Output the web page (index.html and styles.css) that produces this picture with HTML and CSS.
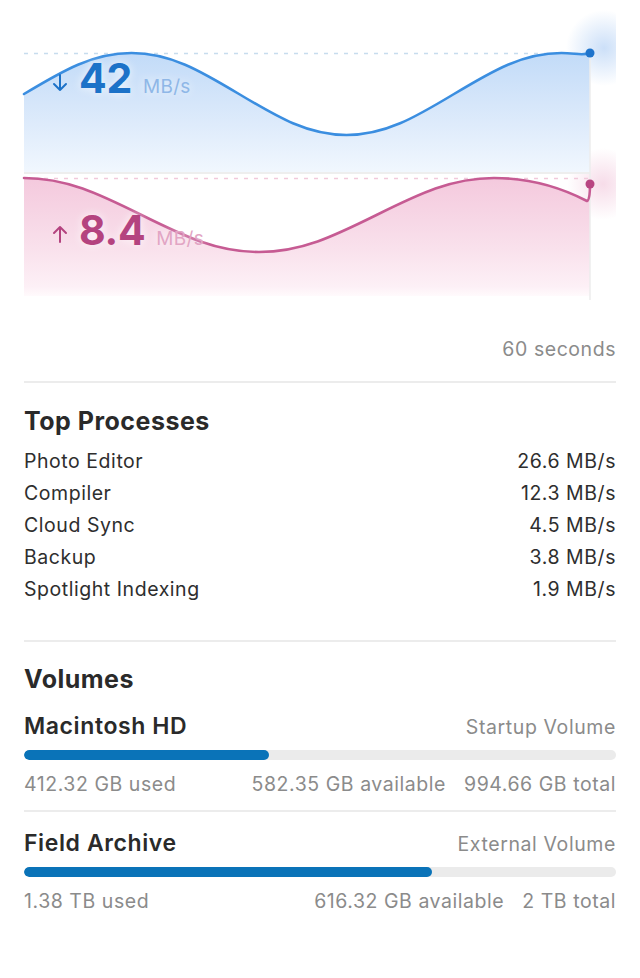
FILE: index.html
```html
<!DOCTYPE html>
<html lang="en">
<head>
<meta charset="utf-8">
<title>Network &amp; Disk</title>
<link rel="stylesheet" href="styles.css">
</head>
<body>
<main class="panel">
  <section class="chart">
    <svg class="chart-svg" width="616" height="300" viewBox="0 0 616 300" xmlns="http://www.w3.org/2000/svg">
      <defs>
        <linearGradient id="blueFill" x1="0" y1="53" x2="0" y2="172" gradientUnits="userSpaceOnUse">
          <stop offset="0" stop-color="#c2dbf8"/>
          <stop offset="0.6" stop-color="#deebfb"/>
          <stop offset="1" stop-color="#f1f7fe"/>
        </linearGradient>
        <linearGradient id="pinkFill" x1="0" y1="178" x2="0" y2="296" gradientUnits="userSpaceOnUse">
          <stop offset="0" stop-color="#f4c9dd"/>
          <stop offset="0.6" stop-color="#f9e1ec"/>
          <stop offset="0.92" stop-color="#fdf0f6"/>
          <stop offset="1" stop-color="#fffafc"/>
        </linearGradient>
        <radialGradient id="blueGlow">
          <stop offset="0" stop-color="#7fb0ee" stop-opacity="0.4"/>
          <stop offset="1" stop-color="#7fb0ee" stop-opacity="0"/>
        </radialGradient>
        <radialGradient id="pinkGlow">
          <stop offset="0" stop-color="#e79bc0" stop-opacity="0.35"/>
          <stop offset="1" stop-color="#e79bc0" stop-opacity="0"/>
        </radialGradient>
      </defs>
      <circle cx="604" cy="48" r="38" fill="url(#blueGlow)"/>
      <circle cx="603" cy="184" r="36" fill="url(#pinkGlow)"/>
      <path d="M24,94 C63.1,70.5 92.8,53 131.5,53 C170.2,53 199.9,70.5 239,94 C278.1,117.5 307.8,135 346.5,135 C385.2,135 414.9,117.5 454,94 C493.1,70.5 522.8,53 561.5,53 C575,53 583,56 590,53 L590,172 L24,172 Z" fill="url(#blueFill)"/>
      <path d="M24,178 C66.3,178 98.7,193.8 141.5,215 C184.3,236.2 216.7,252 259,252 C301.3,252 333.7,236.2 376.5,215 C419.3,193.8 451.7,178 494,178 C530,178 562,188 587,201 Q590,200 590,184 L590,296 L24,296 Z" fill="url(#pinkFill)"/>
      <line x1="24" y1="173" x2="590" y2="173" stroke="#eeeeee" stroke-width="2"/>
      <line x1="590" y1="53" x2="590" y2="300" stroke="#ececec" stroke-width="1.5"/>
      <line x1="24" y1="53.5" x2="590" y2="53.5" stroke="#c7dced" stroke-width="1.5" stroke-dasharray="4 6"/>
      <line x1="24" y1="178.5" x2="590" y2="178.5" stroke="#f1c9db" stroke-width="1.5" stroke-dasharray="4 6"/>
      <path d="M24,94 C63.1,70.5 92.8,53 131.5,53 C170.2,53 199.9,70.5 239,94 C278.1,117.5 307.8,135 346.5,135 C385.2,135 414.9,117.5 454,94 C493.1,70.5 522.8,53 561.5,53 C575,53 583,56 590,53" fill="none" stroke="#3b8ee0" stroke-width="2.6" stroke-linecap="round"/>
      <path d="M24,178 C66.3,178 98.7,193.8 141.5,215 C184.3,236.2 216.7,252 259,252 C301.3,252 333.7,236.2 376.5,215 C419.3,193.8 451.7,178 494,178 C530,178 562,188 587,201 Q590,200 590,184" fill="none" stroke="#c65b93" stroke-width="2.6" stroke-linecap="round" stroke-linejoin="round"/>
      <circle cx="590" cy="53" r="4.5" fill="#1f74cc"/>
      <circle cx="590" cy="184" r="4.5" fill="#b84582"/>
    </svg>
    <div class="readout readout-down">
      <svg class="arrow" width="16" height="18" viewBox="0 0 16 18"><path d="M8 1 V16 M2 10 L8 16 L14 10" fill="none" stroke="currentColor" stroke-width="2" stroke-linecap="round" stroke-linejoin="round"/></svg>
      <span class="value">42</span>
      <span class="unit">MB/s</span>
    </div>
    <div class="readout readout-up">
      <svg class="arrow" width="16" height="18" viewBox="0 0 16 18"><path d="M8 17 V2 M2 8 L8 2 L14 8" fill="none" stroke="currentColor" stroke-width="2" stroke-linecap="round" stroke-linejoin="round"/></svg>
      <span class="value">8.4</span>
      <span class="unit">MB/s</span>
    </div>
  </section>

  <div class="content">
    <p class="timeframe">60 seconds</p>
    <hr class="divider divider-first">

    <h2 class="section-title">Top Processes</h2>
    <ul class="process-list">
      <li class="process"><span>Photo Editor</span><span>26.6 MB/s</span></li>
      <li class="process"><span>Compiler</span><span>12.3 MB/s</span></li>
      <li class="process"><span>Cloud Sync</span><span>4.5 MB/s</span></li>
      <li class="process"><span>Backup</span><span>3.8 MB/s</span></li>
      <li class="process"><span>Spotlight Indexing</span><span>1.9 MB/s</span></li>
    </ul>
    <hr class="divider divider-second">

    <h2 class="section-title volumes-title">Volumes</h2>
    <div class="volume volume-first">
      <div class="volume-head"><span class="volume-name">Macintosh HD</span><span class="volume-kind">Startup Volume</span></div>
      <div class="bar"><div class="bar-fill" style="width: 41.45%"></div></div>
      <div class="volume-stats"><span class="used">412.32 GB used</span><span>582.35 GB available</span><span>994.66 GB total</span></div>
    </div>
    <hr class="divider divider-volume">
    <div class="volume">
      <div class="volume-head"><span class="volume-name">Field Archive</span><span class="volume-kind">External Volume</span></div>
      <div class="bar"><div class="bar-fill" style="width: 69%"></div></div>
      <div class="volume-stats"><span class="used">1.38 TB used</span><span>616.32 GB available</span><span>2 TB total</span></div>
    </div>
  </div>
</main>
</body>
</html>
```

FILE: styles.css
```css
* { box-sizing: border-box; }

html, body {
  margin: 0;
  padding: 0;
  background: #ffffff;
}

body {
  font-family: Inter, "Noto Sans", "Liberation Sans", sans-serif;
  color: #2c2c2c;
  width: 640px;
}

.panel {
  width: 640px;
}

.chart {
  position: relative;
  height: 300px;
}

.chart-svg {
  display: block;
}

.readout {
  position: absolute;
  left: 52px;
  display: flex;
  align-items: baseline;
  white-space: nowrap;
  text-shadow: 0 0 10px rgba(255, 255, 255, 0.8);
}

.readout-down { top: 58px; color: #1c72c8; }
.readout-up { top: 210px; color: #b4437f; }

.readout .arrow {
  align-self: flex-end;
  margin-bottom: 6px;
  margin-right: 11px;
}

.readout-up .arrow { margin-bottom: 7px; }

.readout .value {
  font-size: 41px;
  line-height: 40px;
  font-weight: 700;
  letter-spacing: -0.3px;
}

.readout .unit {
  font-size: 19px;
  margin-left: 11px;
  letter-spacing: 0.3px;
}

.readout-down .unit { color: #8fb7e7; }
.readout-up .unit { color: #e2a5c4; }

.content {
  padding: 0 24px;
}

.timeframe {
  margin: 37px 0 0;
  line-height: 24px;
  font-size: 19.5px;
  letter-spacing: 0.55px;
  text-align: right;
  color: #8b8b8b;
}

.divider {
  border: 0;
  height: 2px;
  background: #ececec;
  margin: 0;
}

.divider-first { margin-top: 20px; }
.divider-second { margin-top: 35px; }
.divider-volume { margin-top: 14px; }

.section-title {
  margin: 23px 0 0;
  font-size: 25px;
  line-height: 30px;
  font-weight: 700;
  letter-spacing: 0.5px;
  color: #2a2a2a;
}

.volumes-title { margin-top: 22px; }

.process-list {
  list-style: none;
  margin: 9px 0 0;
  padding: 0;
}

.process {
  display: flex;
  justify-content: space-between;
  font-size: 19.5px;
  letter-spacing: 0.55px;
  line-height: 32px;
  color: #2e2e2e;
}

.volume {
  margin-top: 17px;
}

.volume-first { margin-top: 18px; }

.volume-head {
  display: flex;
  justify-content: space-between;
  align-items: baseline;
  height: 28px;
  line-height: 28px;
}

.volume-name {
  font-size: 23px;
  font-weight: 600;
  letter-spacing: 0.6px;
  color: #2a2a2a;
}

.volume-kind {
  font-size: 19.5px;
  letter-spacing: 0.6px;
  color: #8b8b8b;
}

.bar {
  margin-top: 10px;
  height: 10px;
  border-radius: 5px;
  background: #ebebeb;
  overflow: hidden;
}

.bar-fill {
  height: 100%;
  border-radius: 5px;
  background: #0a73b8;
}

.volume-stats {
  margin-top: 12px;
  display: flex;
  gap: 18px;
  font-size: 19.5px;
  letter-spacing: 0.55px;
  line-height: 24px;
  color: #8b8b8b;
}

.volume-stats .used { flex: 1; }
```
